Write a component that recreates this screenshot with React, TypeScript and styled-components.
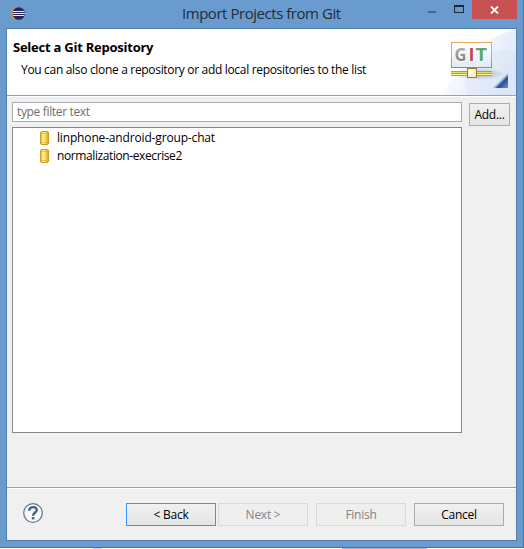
import React from "react";
import styled, { createGlobalStyle } from "styled-components";

const GlobalStyle = createGlobalStyle`
  * { box-sizing: border-box; }
  body { margin: 0; background: #fdfdfd; overflow: hidden; }
  svg { display: block; flex: none; }
`;

const Screen = styled.div`
  width: 524px;
  height: 549px;
  display: flex;
  flex-direction: column;
  font-family: "Open Sans", "Noto Sans", sans-serif;
  font-size: 12px;
  color: #000;
`;

const WindowFrame = styled.div`
  height: 548px;
  background: #699bce;
  border: solid #4a74a6;
  border-width: 0 1px 1px 0;
  padding: 0 6px 6px 6px;
`;

const TitleBar = styled.div`
  height: 28px;
  display: grid;
  grid-template-columns: 176px 1fr 95px;
  align-items: start;
`;

const AppIcon = styled.div`
  padding: 6px 0 0 5px;
`;

const WindowTitle = styled.div`
  line-height: 26px;
  font-size: 15px;
  letter-spacing: -0.46px;
  color: #262b33;
  white-space: nowrap;
`;

const WindowControls = styled.div`
  display: flex;
`;

const CloseButton = styled.div`
  width: 45px;
  height: 19px;
  background: #c75050;
  display: flex;
  align-items: center;
  justify-content: center;
`;

const Client = styled.div`
  width: 511px;
  height: 513px;
  border: 1px solid #557fae;
  background: #f0f0f0;
  display: flex;
  flex-direction: column;
`;

const Header = styled.header`
  height: 68px;
  background: #fff;
  display: flex;
`;

const HeaderRow = styled.div`
  height: 67px;
  flex: 1;
  display: flex;
  justify-content: space-between;
  border-bottom: 1px solid #a0a0a0;
`;

const HeaderText = styled.div`
  padding: 9px 0 0 6px;
  white-space: nowrap;
`;

const Heading = styled.div`
  font-size: 13px;
  font-weight: 700;
  line-height: 18px;
  letter-spacing: -0.24px;
`;

const Description = styled.div`
  margin: 5px 0 0 8px;
  line-height: 18px;
  letter-spacing: -0.32px;
`;

const Body = styled.main`
  height: 390px;
  padding: 5px 6px 0 5px;
  display: flex;
  justify-content: space-between;
`;

const Repositories = styled.div`
  width: 450px;
`;

const FilterBox = styled.div`
  height: 20px;
  border: 1px solid #abadb3;
  background: #fff;
  color: #6d6d6d;
  padding-left: 4px;
  line-height: 18px;
  letter-spacing: -0.34px;
`;

const List = styled.div`
  height: 306px;
  margin-top: 5px;
  padding-top: 1px;
  border: 1px solid #828790;
  background: #fff;
`;

const ListItem = styled.div`
  height: 18px;
  display: flex;
  align-items: center;
  gap: 7px;
  padding-left: 27px;
  line-height: 18px;
  white-space: nowrap;
`;

const ItemLabel = styled.span<{ $tracking: number }>`
  letter-spacing: ${(p) => p.$tracking}px;
`;

const Button = styled.div<{ $width?: number; $kind?: "default" | "disabled" }>`
  width: ${(p) => p.$width ?? 90}px;
  height: 23px;
  line-height: 22px;
  text-align: center;
  letter-spacing: -0.25px;
  white-space: nowrap;
  border: 1px solid
    ${(p) => (p.$kind === "default" ? "#3399ff" : p.$kind === "disabled" ? "#d9d9d9" : "#acacac")};
  background: ${(p) => (p.$kind === "disabled" ? "#efefef" : "linear-gradient(#f0f0f0, #e5e5e5)")};
  color: ${(p) => (p.$kind === "disabled" ? "#838383" : "#000")};
`;

const AddColumn = styled.div`
  padding-top: 1px;
`;

const Footer = styled.footer`
  height: 53px;
  border-top: 1px solid #a0a0a0;
  box-shadow: inset 0 1px #fff;
  padding: 15px 12px 0 15px;
  display: flex;
  justify-content: space-between;
`;

const ButtonRow = styled.div`
  display: flex;
  gap: 8px;
`;

const ButtonPair = styled.div`
  display: flex;
  gap: 2px;
`;

const BehindStrip = styled.div`
  height: 1px;
  display: grid;
  grid-template-columns: 9px 85px;
  column-gap: 240px;
  padding-left: 93px;
`;

const StripMark = styled.div<{ $color: string }>`
  background: ${(p) => p.$color};
`;

const EclipseIcon = () => (
  <svg width="16" height="16" viewBox="0 0 16 16">
    <circle cx="6.6" cy="7.5" r="6.4" fill="#f09a2c" />
    <circle cx="7.7" cy="7.5" r="6.3" fill="#2b2459" />
    <path d="M2 5.5h11.3M1.5 7.5h12.4M2 9.5h11.3" stroke="#e9e8f2" strokeWidth="1" />
  </svg>
);

const Controls = () => (
  <WindowControls>
    <svg width="50" height="19" viewBox="0 0 50 19">
      <rect x="6" y="11" width="8" height="2" fill="#4b6788" />
      <path d="M32 5h10v8H32zM33 7v5h8V7z" fillRule="evenodd" fill="#22272e" />
    </svg>
    <CloseButton>
      <svg width="9" height="8" viewBox="0 0 9 8">
        <path d="M1 .5l7 7M8 .5l-7 7" stroke="#fff" strokeWidth="1.8" />
      </svg>
    </CloseButton>
  </WindowControls>
);

const GitBanner = () => (
  <svg width="75" height="66" viewBox="441 29 75 66">
    <defs>
      <linearGradient id="sky" x1="0" y1="0" x2="1" y2="0.5">
        <stop offset="0.2" stopColor="#fff" />
        <stop offset="1" stopColor="#e0e8f8" />
      </linearGradient>
      <linearGradient id="board" x1="0" y1="0" x2="0" y2="1">
        <stop offset="0" stopColor="#fff" />
        <stop offset="1" stopColor="#dfebf7" />
      </linearGradient>
      <linearGradient id="edge" x1="0" y1="0" x2="0" y2="1">
        <stop offset="0" stopColor="#e9a55b" />
        <stop offset="0.45" stopColor="#c5b39b" />
        <stop offset="1" stopColor="#77929d" />
      </linearGradient>
      <linearGradient id="corner" x1="0" y1="0" x2="1" y2="1">
        <stop offset="0.3" stopColor="#b8d4ef" />
        <stop offset="0.56" stopColor="#8fb2dc" />
        <stop offset="0.62" stopColor="#244d8c" />
        <stop offset="1" stopColor="#7594c5" />
      </linearGradient>
      <linearGradient id="letter-g" x1="0" y1="0" x2="0" y2="1">
        <stop offset="0" stopColor="#b7b7b7" />
        <stop offset="1" stopColor="#747474" />
      </linearGradient>
      <radialGradient id="shade">
        <stop offset="0" stopColor="#887b8b" stopOpacity="0.55" />
        <stop offset="1" stopColor="#887b8b" stopOpacity="0" />
      </radialGradient>
    </defs>
    <path d="M441 95c10-10 8-22 25-34 15-17 31-27 50-32v66z" fill="url(#sky)" />
    <path d="M481 56c10-5 23-7 35-5v44h-48c-8-14 0-30 13-39z" fill="#d5e0f5" opacity=".3" />
    <ellipse cx="480" cy="74" rx="25" ry="6" fill="url(#shade)" />
    <rect x="451.5" y="42.5" width="40" height="25" fill="url(#board)" stroke="url(#edge)" />
    <g fontFamily="Open Sans, sans-serif" fontWeight="700" fontSize="17" stroke="#fff" strokeWidth="1.6" paintOrder="stroke">
      <text x="454.5" y="61.3" fill="url(#letter-g)" textLength="12" lengthAdjust="spacingAndGlyphs">G</text>
      <text x="468.6" y="61.3" fill="#bd4b4e" textLength="6" lengthAdjust="spacingAndGlyphs">I</text>
      <text x="475.4" y="61.3" fill="#60a76b" textLength="11.5" lengthAdjust="spacingAndGlyphs">T</text>
    </g>
    <path d="M470 68h4v2h-4z" fill="#8b7d27" />
    <rect x="451" y="71" width="41" height="5" fill="#b5a13a" />
    <path d="M451 72.5h41" stroke="#e8db70" />
    <path d="M451 74.5h41" stroke="#fff6a0" />
    <rect x="467.5" y="68.5" width="9" height="9" fill="#fbeec0" stroke="#a07a2c" />
    <rect x="469" y="70" width="4" height="4" fill="#fffdf0" />
    <path d="M508 73v15h-15z" fill="url(#corner)" />
  </svg>
);

const RepositoryIcon = () => (
  <svg width="10" height="14" viewBox="0 0 10 14">
    <defs>
      <linearGradient id="gold">
        <stop offset="0" stopColor="#efb726" />
        <stop offset=".4" stopColor="#fff3a0" />
        <stop offset=".65" stopColor="#f8d447" />
        <stop offset="1" stopColor="#e0a01c" />
      </linearGradient>
    </defs>
    <rect x=".5" y=".5" width="8" height="13" rx="1.5" fill="url(#gold)" stroke="#d29a2c" />
    <path d="M1 2.5h7M1 11.5h7" stroke="#dfae35" fill="none" strokeWidth=".7" />
  </svg>
);

const HelpIcon = () => (
  <svg width="22" height="20" viewBox="0 0 22 20">
    <circle cx="11" cy="10" r="9.3" fill="#f8f9fb" stroke="#64728f" strokeWidth="1.2" />
    <path d="M7.2 7.8C7.2 3 14.9 3 14.8 7.1c0 2.4-3.7 2.6-3.7 5.6" fill="none" stroke="#4c5f87" strokeWidth="2.4" />
    <rect x="9.8" y="14" width="2.6" height="2.4" fill="#4c5f87" />
  </svg>
);

const repositories = [
  { name: "linphone-android-group-chat", tracking: -0.16 },
  { name: "normalization-execrise2", tracking: -0.4 },
];

export default function App() {
  return (
    <Screen>
      <GlobalStyle />
      <WindowFrame>
        <TitleBar>
          <AppIcon>
            <EclipseIcon />
          </AppIcon>
          <WindowTitle>Import Projects from Git</WindowTitle>
          <Controls />
        </TitleBar>
        <Client>
          <Header>
            <HeaderRow>
              <HeaderText>
                <Heading>Select a Git Repository</Heading>
                <Description>You can also clone a repository or add local repositories to the list</Description>
              </HeaderText>
              <GitBanner />
            </HeaderRow>
          </Header>
          <Body>
            <Repositories>
              <FilterBox>type filter text</FilterBox>
              <List>
                {repositories.map((r) => (
                  <ListItem key={r.name}>
                    <RepositoryIcon />
                    <ItemLabel $tracking={r.tracking}>{r.name}</ItemLabel>
                  </ListItem>
                ))}
              </List>
            </Repositories>
            <AddColumn>
              <Button $width={41}>Add...</Button>
            </AddColumn>
          </Body>
          <Footer>
            <HelpIcon />
            <ButtonRow>
              <ButtonPair>
                <Button $kind="default">&lt; Back</Button>
                <Button $kind="disabled">Next &gt;</Button>
              </ButtonPair>
              <Button $kind="disabled">Finish</Button>
              <Button>Cancel</Button>
            </ButtonRow>
          </Footer>
        </Client>
      </WindowFrame>
      <BehindStrip>
        <StripMark $color="#c9cbe6" />
        <StripMark $color="#a9adc6" />
      </BehindStrip>
    </Screen>
  );
}
